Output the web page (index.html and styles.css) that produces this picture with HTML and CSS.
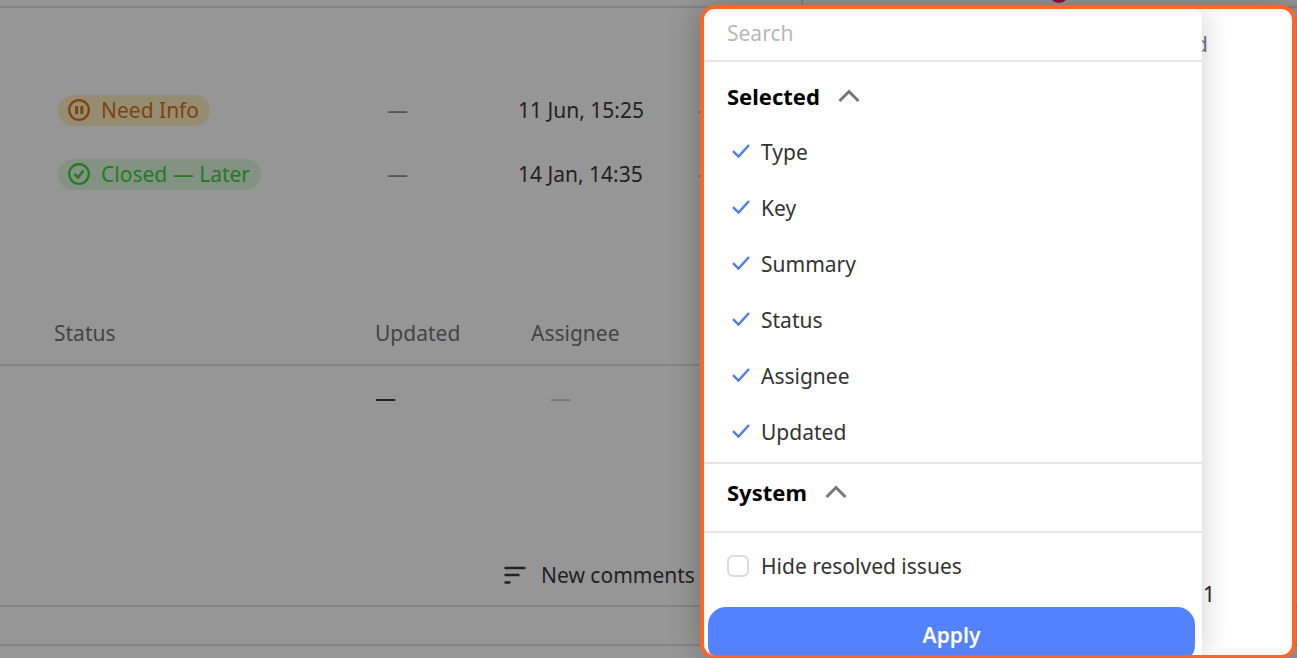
FILE: index.html
```html
<!DOCTYPE html>
<html lang="en">
<head>
    <meta charset="UTF-8">
    <title>Issues</title>
    <link rel="stylesheet" href="styles.css">
</head>
<body>
    <svg class="sprite" aria-hidden="true">
        <symbol id="check" viewBox="0 0 20 20">
            <path d="M2 9.200l5.500 5.300L18 3" fill="none" stroke="currentColor" stroke-width="2.300"/>
        </symbol>
        <symbol id="chevron" viewBox="0 0 22 14">
            <path d="M1.500 12L11 2.500l9.500 9.500" fill="none" stroke="currentColor" stroke-width="3"/>
        </symbol>
    </svg>

    <main class="page">
        <div class="topbar">
            <span class="topbar-divider"></span>
            <span class="topbar-dot"></span>
        </div>

        <table class="issues issues-first">
            <colgroup><col class="col-status"><col class="col-short"><col class="col-date"><col></colgroup>
            <tbody>
                <tr>
                    <td>
                        <span class="badge badge-info">
                            <svg width="22" height="22" viewBox="0 0 22 22" fill="none" stroke="currentColor" stroke-width="2.200">
                                <circle cx="11" cy="11" r="9.800"/>
                                <path d="M8.600 7v8M13.800 7v8" stroke-width="3"/>
                            </svg>
                            Need Info
                        </span>
                    </td>
                    <td class="muted">—</td>
                    <td>11 Jun, 15:25</td>
                    <td class="muted">—</td>
                </tr>
                <tr>
                    <td>
                        <span class="badge badge-closed">
                            <svg width="22" height="22" viewBox="0 0 22 22" fill="none" stroke="currentColor" stroke-width="2.200">
                                <circle cx="11" cy="11" r="9.800"/>
                                <path d="M6.500 11l3.500 3.500 5.500-7" stroke-width="2.600"/>
                            </svg>
                            Closed — Later
                        </span>
                    </td>
                    <td class="muted">—</td>
                    <td>14 Jan, 14:35</td>
                    <td class="muted">—</td>
                </tr>
            </tbody>
        </table>

        <table class="issues issues-second">
            <colgroup><col class="col-wide"><col class="col-updated"><col></colgroup>
            <thead>
                <tr><th>Status</th><th>Updated</th><th>Assignee</th></tr>
            </thead>
            <tbody>
                <tr><td></td><td class="updated">—</td><td class="empty">—</td></tr>
            </tbody>
        </table>

        <div class="comments-bar">
            <button class="sort-btn" type="button">
                <svg width="22" height="20" viewBox="0 0 22 20" stroke="currentColor" stroke-width="2.400" stroke-linecap="round">
                    <path d="M1.500 3h19M1.500 10h13M1.500 17.500h4"/>
                </svg>
                New comments
            </button>
        </div>
        <div class="bottom-row"></div>
    </main>

    <aside class="spotlight">
        <form class="panel">
            <input class="search" type="text" placeholder="Search" aria-label="Search">

            <section class="group">
                <button class="group-title" type="button">Selected <svg width="22" height="14"><use href="#chevron"/></svg></button>
                <ul class="fields">
                    <li><label><input type="checkbox" checked><svg width="20" height="20"><use href="#check"/></svg>Type</label></li>
                    <li><label><input type="checkbox" checked><svg width="20" height="20"><use href="#check"/></svg>Key</label></li>
                    <li><label><input type="checkbox" checked><svg width="20" height="20"><use href="#check"/></svg>Summary</label></li>
                    <li><label><input type="checkbox" checked><svg width="20" height="20"><use href="#check"/></svg>Status</label></li>
                    <li><label><input type="checkbox" checked><svg width="20" height="20"><use href="#check"/></svg>Assignee</label></li>
                    <li><label><input type="checkbox" checked><svg width="20" height="20"><use href="#check"/></svg>Updated</label></li>
                </ul>
            </section>

            <section class="group group-system">
                <button class="group-title" type="button">System <svg width="22" height="14"><use href="#chevron"/></svg></button>
            </section>

            <label class="hide-resolved"><input type="checkbox">Hide resolved issues</label>
            <button class="apply-btn" type="button">Apply</button>
        </form>
        <div class="rest">
            <span class="rest-head">d</span>
            <span class="rest-count">1</span>
        </div>
    </aside>
</body>
</html>
```

FILE: styles.css
```css
* {
    box-sizing: border-box;
}
body {
    margin: 0;
    position: relative;
    min-height: 100vh;
    overflow: hidden;
    font-family: "Noto Sans", sans-serif;
    font-size: 21px;
    line-height: 28px;
    color: #222;
    background-color: #969696;
}
button,
input {
    font: inherit;
    color: inherit;
}
button {
    padding: 0;
    border: none;
    background: none;
    cursor: pointer;
}
.sprite {
    display: none;
}

/* dimmed page */
.topbar {
    display: flex;
    height: 8px;
    border-bottom: 2px solid #848484;
}
.topbar-divider {
    width: 2px;
    margin-left: 801px;
    background-color: #848484;
}
.topbar-dot {
    width: 20px;
    height: 20px;
    margin-top: -17px;
    margin-left: 246px;
    border-radius: 50%;
    background-color: #990a45;
}
.issues {
    width: 100%;
    table-layout: fixed;
    border-collapse: collapse;
}
.issues th,
.issues td {
    height: 64px;
    padding: 0;
    text-align: left;
    font-weight: normal;
    white-space: nowrap;
}
.issues th {
    color: #444;
    border-bottom: 2px solid #848484;
}
.issues .muted {
    color: #555;
}
.issues .updated {
    font-weight: 500;
}
.issues .empty {
    padding-left: 19px;
    color: #777;
}
.issues-first {
    margin-top: 70px;
}
.issues-first td:first-child {
    padding-left: 58px;
}
.issues-second {
    margin-top: 95px;
}
.issues-second th:first-child {
    padding-left: 54px;
}
.col-status {
    width: 387px;
}
.col-short {
    width: 131px;
}
.col-date {
    width: 180px;
}
.col-wide {
    width: 375px;
}
.col-updated {
    width: 156px;
}
.badge {
    display: inline-flex;
    align-items: center;
    gap: 11px;
    height: 31px;
    padding: 0 11px 0 10px;
    border-radius: 16px;
    vertical-align: middle;
}
.badge-info {
    color: #80430f;
    background-color: #958d71;
}
.badge-closed {
    color: #247a24;
    background-color: #839283;
}
.comments-bar {
    display: flex;
    align-items: center;
    height: 62px;
    margin-top: 116px;
    padding-left: 504px;
    border-bottom: 2px solid #848484;
}
.sort-btn {
    display: flex;
    align-items: center;
    gap: 15px;
}
.bottom-row {
    height: 39px;
    border-bottom: 2px solid #848484;
}

/* highlighted area over the page */
.spotlight {
    position: absolute;
    top: 5px;
    right: 1px;
    bottom: -1px;
    display: flex;
    width: 596px;
    overflow: hidden;
    border: 4px solid #ff6526;
    border-radius: 15px;
    background-color: #fff;
    box-shadow: 0 0 30px rgba(0, 0, 0, 0.25);
}
.panel {
    position: relative;
    z-index: 1;
    flex: none;
    display: flex;
    flex-direction: column;
    width: 498px;
    border-top-right-radius: 8px;
    color: #333;
    background-color: #fff;
    box-shadow: 0 0 30px rgba(0, 0, 0, 0.2);
}
.search {
    flex: none;
    height: 53px;
    padding: 0 23px 4px;
    border: none;
    border-bottom: 2px solid #e5e5e5;
    border-top-right-radius: 8px;
    background: none;
    outline: none;
}
.search::placeholder {
    color: #b8b8b8;
}
.group {
    flex: none;
    padding-top: 20px;
    border-bottom: 2px solid #e5e5e5;
}
.group-title {
    display: flex;
    align-items: center;
    gap: 18px;
    padding-left: 23px;
    font-size: 22px;
    font-weight: 700;
    color: #000;
}
.group-title svg {
    color: #777;
}
.fields {
    margin: 0;
    padding: 14px 0 2px;
    list-style: none;
}
.fields label {
    display: flex;
    align-items: center;
    gap: 10px;
    height: 56px;
    padding-left: 27px;
}
.fields input {
    appearance: none;
    position: absolute;
    margin: 0;
}
.fields svg {
    color: #4a7cf5;
}
.group-system {
    height: 69px;
    padding-top: 14px;
}
.hide-resolved {
    flex: none;
    display: flex;
    align-items: center;
    gap: 12px;
    height: 74px;
    padding: 0 23px 8px;
}
.hide-resolved input {
    appearance: none;
    width: 22px;
    height: 22px;
    margin: 0;
    border: 2px solid #dcdcdc;
    border-radius: 6px;
}
.apply-btn {
    flex: none;
    height: 56px;
    margin: 0 7px 0 4px;
    border-radius: 18px;
    font-weight: 600;
    color: #fff;
    background-color: #5282ff;
}
.rest {
    display: flex;
    flex-direction: column;
    justify-content: space-between;
    padding: 21px 0 47px;
}
.rest-head {
    margin-left: -7px;
    color: #777;
}
.rest-count {
    margin-left: 1px;
}
```
